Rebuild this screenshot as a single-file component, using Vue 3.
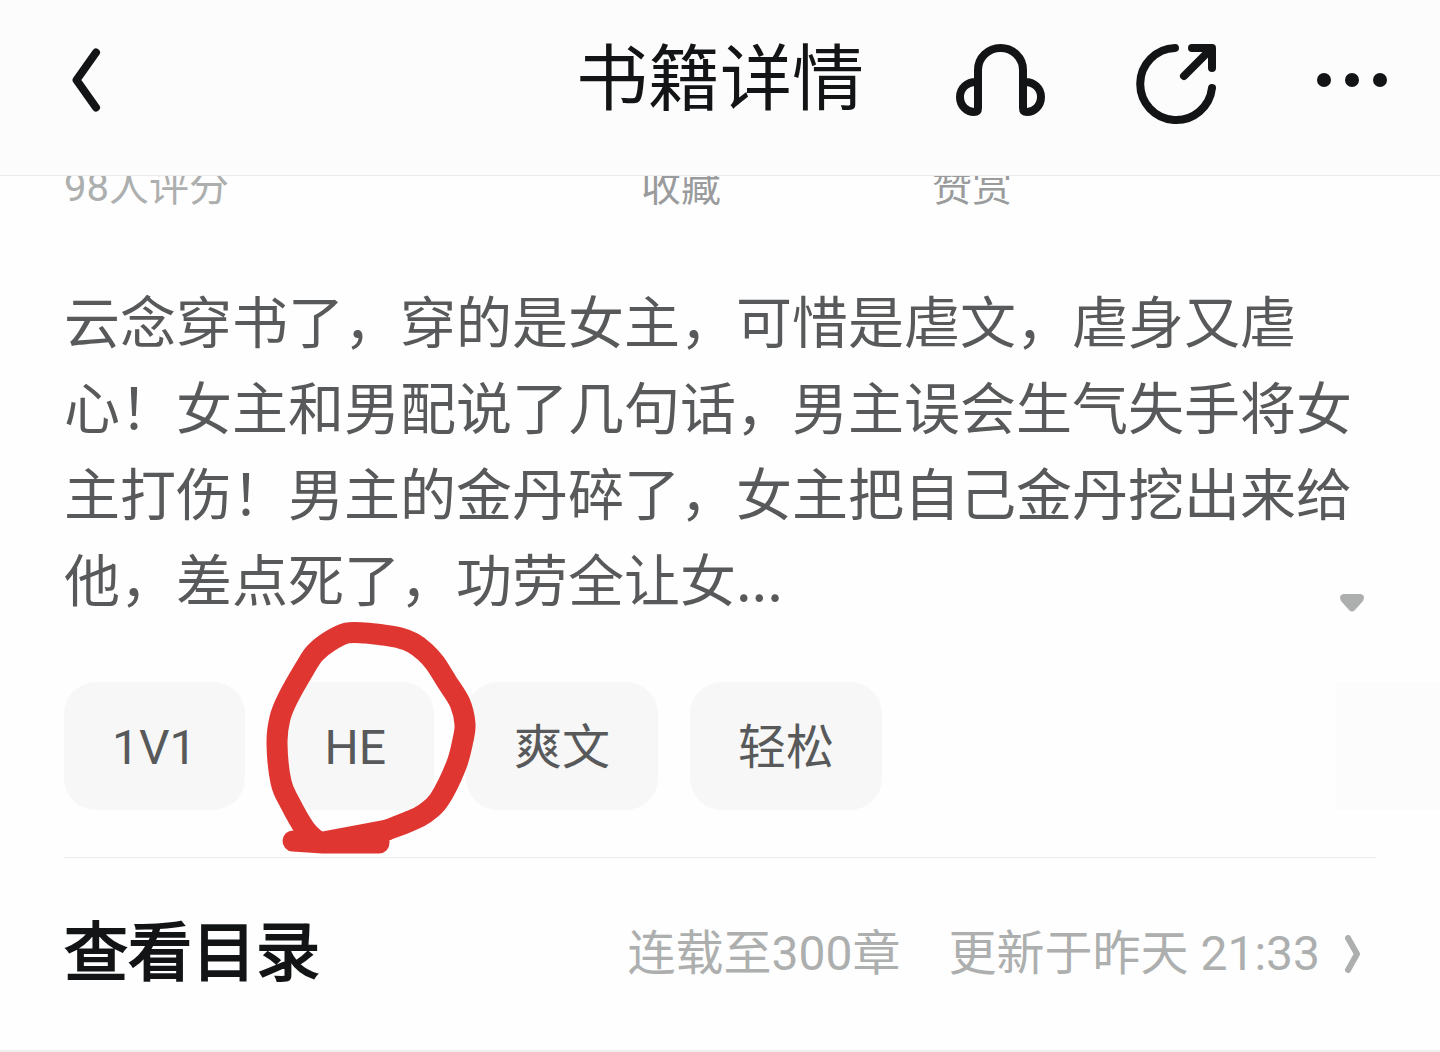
<script setup>
const stats = ['98人评分', '收藏', '赞赏']
const tags = ['1V1', 'HE', '爽文', '轻松']
const circled = 'HE'
const intro =
  '云念穿书了，穿的是女主，可惜是虐文，虐身又虐心！女主和男配说了几句话，男主误会生气失手将女主打伤！男主的金丹碎了，女主把自己金丹挖出来给他，差点死了，功劳全让女...'

// Points of the hand-drawn loop, joined by a smooth curve through each of them.
const loop = [
  [387, 830], [410, 821], [424, 814], [439, 800], [456, 766], [463, 740],
  [465, 724], [460, 703], [447, 682], [435, 663], [425, 652], [413, 643],
  [400, 638], [383, 635], [365, 633], [347, 633], [330, 641], [315, 653],
  [305, 668], [288, 698], [280, 718], [277, 743], [281, 782], [290, 803],
  [305, 829], [317, 841],
]

function smooth(points) {
  let d = `M${points[0].join(' ')}`
  for (let i = 0; i < points.length - 1; i++) {
    const a = points[i - 1] ?? points[i]
    const b = points[i]
    const c = points[i + 1]
    const e = points[i + 2] ?? c
    d += `C${b[0] + (c[0] - a[0]) / 6} ${b[1] + (c[1] - a[1]) / 6} `
    d += `${c[0] - (e[0] - b[0]) / 6} ${c[1] - (e[1] - b[1]) / 6} ${c[0]} ${c[1]}`
  }
  return d
}

const loopPath = smooth(loop)
</script>

<template>
  <div class="page" lang="zh-CN">
    <header class="bar">
      <div class="side">
        <button class="icon" type="button" aria-label="返回">
          <svg width="32" height="66" viewBox="0 0 32 66">
            <path d="M26 5.500L6.500 33L26 60.500" stroke-width="8" />
          </svg>
        </button>
      </div>
      <h1>书籍详情</h1>
      <div class="side actions">
        <button class="icon" type="button" aria-label="听书">
          <svg width="90" height="80" viewBox="0 0 90 80">
            <path
              d="M22 68V30A22.500 22 0 0 1 67 30V68M22 42H20C11 42 4 48 4 57C4 66 11 72 18 72Q22 72 22 68M67 42H69C78 42 85 48 85 57C85 66 78 72 71 72Q67 72 67 68"
              stroke-width="8"
            />
          </svg>
        </button>
        <button class="icon" type="button" aria-label="分享">
          <svg width="82" height="88" viewBox="0 0 82 88">
            <path
              d="M39 12A36 36 0 1 0 76 52M56 12H76V32M75 13L48 40"
              stroke-width="8"
            />
          </svg>
        </button>
        <button class="icon" type="button" aria-label="更多">
          <svg class="dots" width="72" height="16" viewBox="0 0 72 16">
            <circle cx="8" cy="8" r="7" />
            <circle cx="36" cy="8" r="7" />
            <circle cx="64" cy="8" r="7" />
          </svg>
        </button>
      </div>
    </header>

    <main>
      <div class="stats">
        <span v-for="s in stats" :key="s">{{ s }}</span>
      </div>

      <section class="intro">
        <p>{{ intro }}</p>
        <button class="expand" type="button" aria-label="展开简介">
          <svg width="24" height="18" viewBox="0 0 24 18">
            <path
              d="M4 0H20Q23 0 24 3Q24 5 23 7L15 16Q12 19 9 16L1 7Q0 5 0 3Q1 0 4 0Z"
            />
          </svg>
        </button>
      </section>

      <div class="tags">
        <div v-for="t in tags" :key="t" class="slot">
          <button class="tag" type="button">{{ t }}</button>
          <svg
            v-if="t === circled"
            class="mark"
            width="230"
            height="250"
            viewBox="260 610 230 250"
            aria-hidden="true"
          >
            <path :d="loopPath" />
            <path d="M293 841L323 843H379M317 841L323 842L387 830M379 832V843" />
          </svg>
        </div>
      </div>

      <a class="catalog" href="#catalog">
        <h2>查看目录</h2>
        <span>连载至300章</span>
        <span>更新于昨天 21:33</span>
        <svg width="18" height="38" viewBox="0 0 18 38">
          <path d="M4 3L13 19L4 35" />
        </svg>
      </a>
    </main>
  </div>
</template>

<style>
body {
  margin: 0;
  background: #fefefe;
}
</style>

<style scoped>
.page {
  font-family: Roboto, 'Noto Sans CJK SC', sans-serif;
  color: #121415;
}

button {
  font: inherit;
  color: inherit;
  border: 0;
  padding: 0;
  background: none;
  cursor: pointer;
}

h1,
h2,
p {
  margin: 0;
}

.bar {
  position: sticky;
  top: 0;
  z-index: 2;
  display: grid;
  grid-template-columns: 1fr auto 1fr;
  align-items: center;
  padding: 28px 52px 43px 70px;
  background: #fcfcfc;
  border-bottom: 1px solid #ececec;
}

.bar h1 {
  font-size: 72px;
  font-weight: 400;
  line-height: 104px;
  margin-left: -18px;
}

.side {
  display: flex;
  align-items: center;
}

.actions {
  justify-content: flex-end;
  gap: 98px;
}

.actions .icon:first-child {
  margin-right: -8px;
}

.icon {
  display: flex;
}

.icon path {
  fill: none;
  stroke: #121415;
  stroke-linecap: round;
  stroke-linejoin: round;
}

.dots {
  fill: #121415;
}

.stats {
  display: grid;
  grid-template-columns: 577fr 291fr 444fr;
  margin: -12px 64px 0;
  font-size: 40px;
  line-height: 48px;
  color: #999b9c;
}

.stats span:first-child {
  color: #adafaf;
}

.intro {
  position: relative;
  margin: 64px 64px 0;
}

.intro p {
  font-family: 'Noto Sans CJK SC', sans-serif;
  font-size: 56px;
  line-height: 86px;
  color: #58595a;
}

.expand {
  position: absolute;
  right: 12px;
  bottom: 8px;
  display: flex;
  fill: #adafaf;
}

.tags {
  display: flex;
  gap: 32px;
  margin-top: 62px;
  padding-left: 64px;
  background: linear-gradient(#fcfcfc, #fcfcfc) right / 104px 100% no-repeat;
}

.slot {
  position: relative;
}

.tag {
  display: block;
  padding: 34px 48px 30px;
  border-radius: 32px;
  background: #f7f7f7;
  font-size: 48px;
  line-height: 64px;
  color: #58595a;
}

.mark {
  position: absolute;
  left: -17px;
  top: -72px;
  z-index: 1;
  pointer-events: none;
}

.mark path {
  fill: none;
  stroke: #e03631;
  stroke-width: 21;
  stroke-linecap: round;
  stroke-linejoin: round;
}

.catalog {
  display: flex;
  align-items: center;
  gap: 48px;
  margin-top: 47px;
  padding: 49px 78px 48px 64px;
  border-bottom: 2px solid #efefef;
  background: linear-gradient(#ececec, #ececec) center top / calc(100% - 128px) 1px no-repeat;
  color: #adafaf;
  font-size: 48px;
  line-height: 96px;
  text-decoration: none;
}

.catalog h2 {
  margin-right: auto;
  font-size: 64px;
  font-weight: 400;
  -webkit-text-stroke: 2px #121415;
  color: #121415;
}

.catalog svg {
  margin-left: -24px;
  fill: none;
  stroke: #adafaf;
  stroke-width: 6;
  stroke-linecap: round;
  stroke-linejoin: round;
}
</style>
